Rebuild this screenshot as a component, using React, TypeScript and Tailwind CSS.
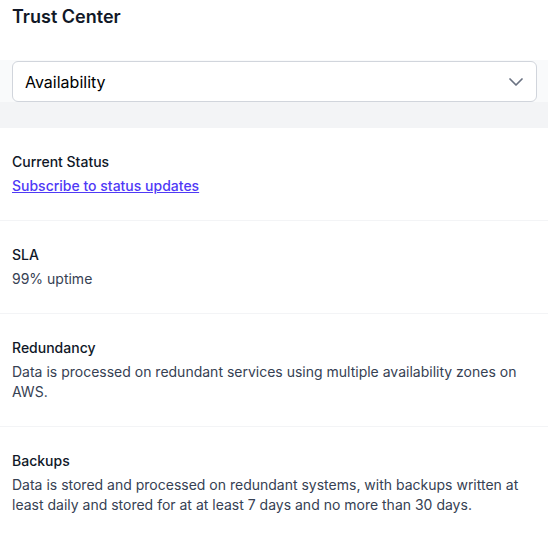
import React from "react";
import { ChevronDown } from "lucide-react";

interface Item {
  title: string;
  body?: string;
  link?: string;
}

const items: Item[] = [
  { title: "Current Status", link: "Subscribe to status updates" },
  { title: "SLA", body: "99% uptime" },
  {
    title: "Redundancy",
    body: "Data is processed on redundant services using multiple availability zones on AWS.",
  },
  {
    title: "Backups",
    body: "Data is stored and processed on redundant systems, with backups written at least daily and stored for at at least 7 days and no more than 30 days.",
  },
];

const App = () => {
  return (
    <div
      className="min-h-screen bg-white text-gray-900"
      style={{ fontFamily: "Inter, 'Noto Sans', sans-serif" }}
    >
      <header className="h-[60px] px-3 pt-[3px]">
        <h1 className="text-lg leading-7 font-semibold text-[#111827]">Trust Center</h1>
      </header>

      <div className="bg-gray-50 pl-3 pr-[11px] pt-px">
        <button className="w-full h-[41px] flex items-center justify-between rounded-md border border-gray-300 bg-white pl-3 pr-2 text-left text-base text-black">
          <span>Availability</span>
          <ChevronDown className="h-6 w-6 text-gray-500" strokeWidth={1.75} />
        </button>
      </div>
      <div className="h-[26px] bg-gray-100" />

      <ul className="divide-y divide-gray-100">
        {items.map((item) => (
          <li key={item.title} className="px-3 py-6 text-sm leading-5">
            <h3 className="font-medium text-gray-900">{item.title}</h3>
            <div className="mt-1">
              {item.link ? (
                <a href="#" className="font-medium text-indigo-600 underline">
                  {item.link}
                </a>
              ) : (
                <p className="text-gray-700">{item.body}</p>
              )}
            </div>
          </li>
        ))}
      </ul>
    </div>
  );
};

export default App;
